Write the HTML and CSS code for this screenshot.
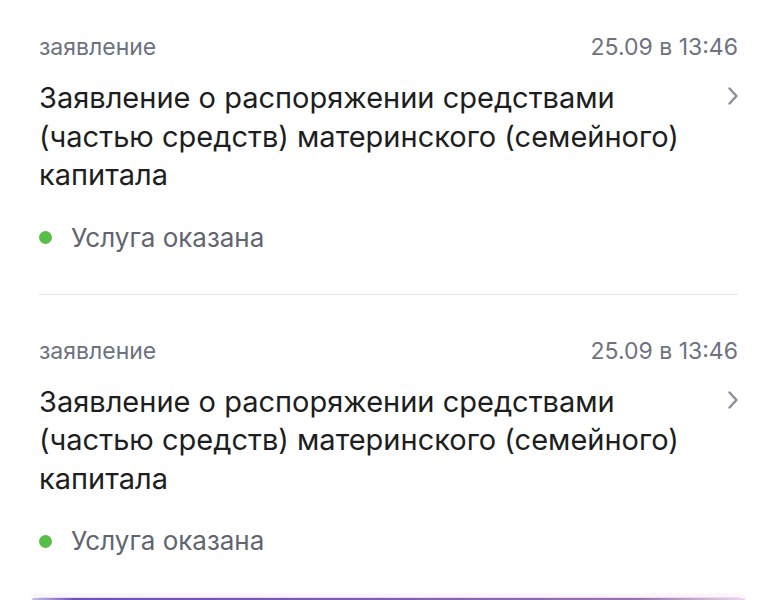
FILE: index.html
```html
<!DOCTYPE html>
<html lang="ru">
<head>
<meta charset="utf-8">
<link rel="stylesheet" href="styles.css">
</head>
<body>
<div class="list">
  <div class="card first">
    <div class="meta">
      <span class="kind">заявление</span>
      <span class="date">25.09 в 13:46</span>
    </div>
    <div class="title-row">
      <div class="title">Заявление о распоряжении средствами<br>(частью средств) материнского (семейного)<br>капитала</div>
      <svg class="chev" width="14" height="20" viewBox="0 0 14 20"><path d="M3.5 2.5 L10.5 10 L3.5 17.5" fill="none" stroke="#8a8e97" stroke-width="2.4" stroke-linecap="round" stroke-linejoin="round"/></svg>
    </div>
    <div class="status"><span class="dot"></span>Услуга оказана</div>
  </div>
  <div class="card">
    <div class="meta">
      <span class="kind">заявление</span>
      <span class="date">25.09 в 13:46</span>
    </div>
    <div class="title-row">
      <div class="title">Заявление о распоряжении средствами<br>(частью средств) материнского (семейного)<br>капитала</div>
      <svg class="chev" width="14" height="20" viewBox="0 0 14 20"><path d="M3.5 2.5 L10.5 10 L3.5 17.5" fill="none" stroke="#8a8e97" stroke-width="2.4" stroke-linecap="round" stroke-linejoin="round"/></svg>
    </div>
    <div class="status"><span class="dot"></span>Услуга оказана</div>
  </div>
  <div class="bar"></div>
</div>
</body>
</html>
```

FILE: styles.css
```css
html, body {
  margin: 0;
  padding: 0;
  background: #ffffff;
}
body {
  font-family: Inter, "Noto Sans", sans-serif;
  width: 776px;
  height: 600px;
  overflow: hidden;
}
.list {
  padding: 0 38px 0 39px;
}
.card {
  padding: 42px 0 42px;
  border-bottom: 1px solid #e6e7ea;
}
.card.first {
  padding-top: 33px;
}
.card:last-of-type {
  border-bottom: none;
}
.meta {
  display: flex;
  justify-content: space-between;
  align-items: center;
  height: 28px;
  font-size: 23px;
  line-height: 28px;
  color: #6d7280;
}
.title-row {
  display: flex;
  justify-content: space-between;
  align-items: flex-start;
  margin-top: 18px;
}
.title {
  font-size: 29px;
  line-height: 38.5px;
  color: #1d1e22;
}
.chev {
  margin-top: 7px;
  margin-right: -2px;
}
.status {
  display: flex;
  align-items: center;
  margin-top: 29px;
  height: 28px;
  font-size: 26px;
  line-height: 28px;
  color: #5f6571;
}
.dot {
  width: 13px;
  height: 13px;
  border-radius: 50%;
  background: #58be48;
  margin-right: 19px;
}
.bar {
  margin: 0 -7px;
  height: 3px;
  border-radius: 2px;
  background: linear-gradient(90deg, rgba(120,90,200,0.4), #6e52b8 6%, #7c5cb4 45%, #9a72ae 85%, rgba(180,130,180,0.3));
  box-shadow: 0 -3px 4px rgba(230, 190, 235, 0.35);
}
```
